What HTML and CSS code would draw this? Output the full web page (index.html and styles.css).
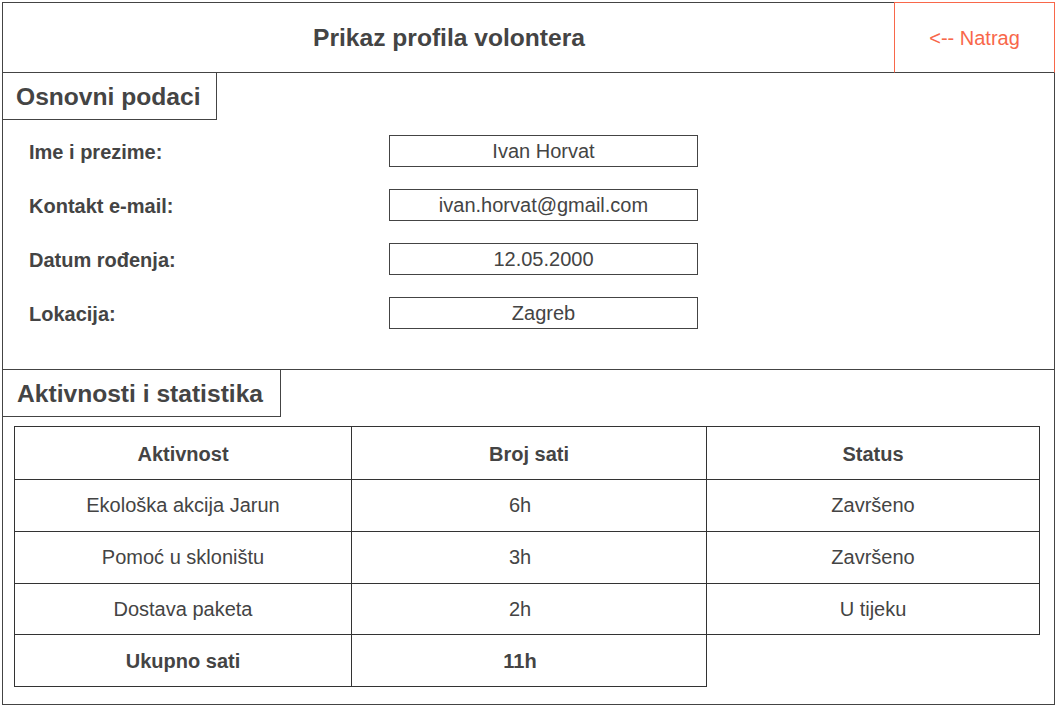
FILE: index.html
```html
<!DOCTYPE html>
<html lang="hr">
<head>
  <meta charset="UTF-8" />
  <meta name="viewport" content="width=device-width, initial-scale=1" />
  <title>Prikaz profila volontera</title>
  <link rel="stylesheet" href="styles.css">
</head>
<body>
  <div class="page">
    <header class="topbar">
      <h1 class="topbar-title">Prikaz profila volontera</h1>
      <a class="back-link" href="#">&lt;-- Natrag</a>
    </header>

    <section class="panel panel-basic">
      <h2 class="panel-title">Osnovni podaci</h2>
      <div class="fields">
        <div class="field-label">Ime i prezime:</div>
        <div class="field-value">Ivan Horvat</div>
        <div class="field-label">Kontakt e-mail:</div>
        <div class="field-value">ivan.horvat@gmail.com</div>
        <div class="field-label">Datum rođenja:</div>
        <div class="field-value">12.05.2000</div>
        <div class="field-label">Lokacija:</div>
        <div class="field-value">Zagreb</div>
      </div>
    </section>

    <section class="panel panel-stats">
      <h2 class="panel-title panel-title-wide">Aktivnosti i statistika</h2>
      <div class="stats-table">
        <div class="cell head">Aktivnost</div>
        <div class="cell head">Broj sati</div>
        <div class="cell head">Status</div>

        <div class="cell">Ekološka akcija Jarun</div>
        <div class="cell hours">6h</div>
        <div class="cell">Završeno</div>

        <div class="cell">Pomoć u skloništu</div>
        <div class="cell hours">3h</div>
        <div class="cell">Završeno</div>

        <div class="cell">Dostava paketa</div>
        <div class="cell hours">2h</div>
        <div class="cell">U tijeku</div>

        <div class="cell head">Ukupno sati</div>
        <div class="cell head hours">11h</div>
      </div>
    </section>
  </div>
</body>
</html>
```

FILE: styles.css
```css
:root {
  --text: #444;
  --line: #444;
  --table-line: #333;
  --accent: #f8674a;
}
* {
  box-sizing: border-box;
}
body {
  margin: 0;
  background: #fff;
  font-family: "Liberation Sans", Arial, Helvetica, sans-serif;
  color: var(--text);
}
.page {
  width: 1053px;
  margin: 2px 0 0 2px;
}

/* top bar */
.topbar {
  display: flex;
  height: 71px;
}
.topbar-title {
  flex: 1;
  margin: 0;
  display: flex;
  align-items: center;
  justify-content: center;
  border: 1px solid var(--line);
  border-right: none;
  font-size: 24.6px;
  font-weight: bold;
  padding-left: 1px;
}
.back-link {
  width: 161px;
  display: flex;
  align-items: center;
  justify-content: center;
  border: 1px solid var(--accent);
  border-bottom-color: var(--line);
  color: var(--accent);
  text-decoration: none;
  font-size: 20px;
  padding-top: 2px;
}

/* panels */
.panel {
  border: 1px solid var(--line);
  border-top: none;
}
.panel-basic {
  height: 297px;
}
.panel-stats {
  height: 335px;
}
.panel-title {
  width: 214px;
  height: 47px;
  margin: 0;
  padding: 1px 0 0 13px;
  display: flex;
  align-items: center;
  border-right: 1px solid var(--line);
  border-bottom: 1px solid var(--line);
  font-size: 24.6px;
  font-weight: bold;
}
.panel-title-wide {
  width: 278px;
  padding-left: 14px;
}

/* basic data */
.fields {
  display: grid;
  grid-template-columns: 360px 309px;
  grid-template-rows: repeat(4, 32px);
  row-gap: 22px;
  margin: 15px 0 0 26px;
}
.field-label {
  display: flex;
  align-items: center;
  padding-top: 3px;
  font-size: 20px;
  font-weight: bold;
}
.field-value {
  height: 32px;
  display: flex;
  align-items: center;
  justify-content: center;
  border: 1px solid var(--line);
  font-size: 20px;
}

/* stats table */
.stats-table {
  display: grid;
  grid-template-columns: 337px 355px 333px;
  grid-template-rows: 53px 52px 52px 51px 52px;
  width: 1026px;
  margin: 9px 0 0 11px;
  border-top: 1px solid var(--table-line);
  border-left: 1px solid var(--table-line);
}
.cell {
  display: flex;
  align-items: center;
  justify-content: center;
  border-right: 1px solid var(--table-line);
  border-bottom: 1px solid var(--table-line);
  font-size: 20px;
}
.cell.head {
  font-weight: bold;
  padding-top: 2px;
}
.cell.hours {
  padding-right: 18px;
}
```
